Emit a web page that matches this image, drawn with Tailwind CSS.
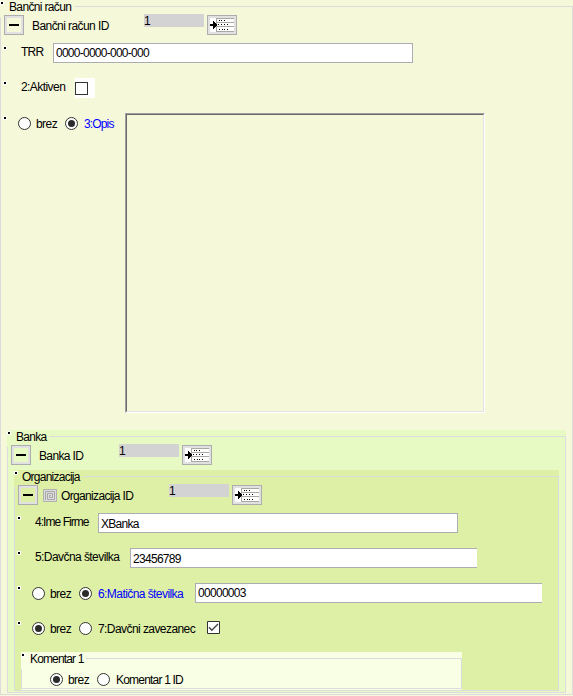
<!DOCTYPE html>
<html lang="sl">
<head>
<meta charset="utf-8">
<title>Bančni račun</title>
<script src="https://cdn.jsdelivr.net/npm/@tailwindcss/browser@4"></script>
</head>
<body class="w-[573px] h-[696px] overflow-hidden bg-[#f6f8da] font-['Liberation_Sans',Arial,sans-serif] text-[12px] leading-[14px] tracking-[-0.57px] text-black whitespace-nowrap">
<svg class="hidden">
  <symbol id="radio" viewBox="0 0 13 13"><circle cx="6.5" cy="6.5" r="6" fill="#fff" stroke="#333"/></symbol>
  <symbol id="radio-on" viewBox="0 0 13 13"><circle cx="6.5" cy="6.5" r="6" fill="#fff" stroke="#333"/><circle cx="6.5" cy="6.5" r="3.5" fill="#2b2b2b"/></symbol>
  <symbol id="pick" viewBox="0 0 24 14">
    <path fill="#fff" d="M0 0h24v14H0z"/>
    <path fill="#a8a8a0" d="M6 0h18v1H6zM6 4h18v1H6zM6 8h18v1H6zM6 13h18v1H6zM6 0h1v14H6z"/>
    <path fill="#000" d="M0 6h3V3h1v1h1v1h1v1h1v2H6v1H5v1H4v1H3V8H0z"/>
    <path fill="#000" d="M9 2h1v1H9zM11 2h1v1h-1zM14 2h1v1h-1zM8 6h1v1H8zM11 6h1v1h-1zM14 6h1v1h-1zM17 6h1v1h-1zM9 11h1v1H9zM12 11h1v1h-1zM14 11h1v1h-1zM17 11h1v1h-1z"/>
  </symbol>
  <symbol id="dot" viewBox="0 0 4 4"><path fill="#fff" d="M0 0h4v4H0z"/><path fill="#000" d="M1 1h2v2H1z"/></symbol>
</svg>

<section class="flex flex-col w-[573px] h-[695px]">
  <header class="flex h-[17px] shrink-0">
    <svg class="w-[4px] h-[4px] mt-[1px]"><use href="#dot"/></svg>
    <h1 class="ml-[5px] w-[65px] tracking-[-0.65px]">Bančni račun</h1>
    <div class="flex-1 mt-[6px] border-t border-r border-[#dcdcdc]"></div>
  </header>
  <div class="flex-1 flex flex-col border border-t-0 border-[#dcdcdc]">
    <div class="flex h-[20px] -mt-[2px] shrink-0">
      <button class="ml-[3px] w-[20px] h-[20px] border border-[#adadad] bg-[#e1e1e1] p-[2px]"><span class="flex h-full bg-[#f6f8da] items-center justify-center"><span class="w-[10px] h-[2px] bg-black"></span></span></button>
      <label class="ml-[8px] mt-[4px] w-[112px]">Bančni račun ID</label>
      <output class="-mt-[1px] w-[60px] h-[13px] bg-[#d3d3d3]">1</output>
      <button class="ml-[3px] w-[30px] h-[20px] border border-[#adadad] bg-[#e1e1e1] p-[2px]"><svg class="w-[24px] h-[14px]"><use href="#pick"/></svg></button>
    </div>
    <div class="flex h-[20px] mt-[8px] shrink-0">
      <svg class="ml-[2px] mt-[3px] w-[4px] h-[4px]"><use href="#dot"/></svg>
      <label class="ml-[14px] mt-[2px] w-[32px] tracking-[-0.8px]">TRR</label>
      <div class="w-[360px] h-[20px] border border-[#abadb3] bg-white pl-[2px] pt-[2px] tracking-[-0.74px]">0000-0000-000-000</div>
    </div>
    <div class="flex h-[20px] mt-[15px] shrink-0">
      <svg class="ml-[2px] mt-[3px] w-[4px] h-[4px]"><use href="#dot"/></svg>
      <label class="ml-[14px] mt-[2px] w-[54px]">2:Aktiven</label>
      <div class="w-[20px] h-[20px] bg-white flex items-center"><div class="w-[13px] h-[13px] border border-[#333]"></div></div>
    </div>
    <div class="flex h-[300px] mt-[15px] shrink-0">
      <svg class="ml-[2px] mt-[3px] w-[4px] h-[4px]"><use href="#dot"/></svg>
      <svg class="ml-[11px] mt-[4px] w-[13px] h-[13px]"><use href="#radio"/></svg>
      <label class="ml-[5px] mt-[4px] w-[29px]">brez</label>
      <svg class="mt-[4px] w-[13px] h-[13px]"><use href="#radio-on"/></svg>
      <label class="ml-[6px] mt-[4px] w-[41px] text-[#0000ff] tracking-[-0.85px]">3:Opis</label>
      <div class="w-[360px] h-[300px] border border-t-[#a0a0a0] border-l-[#a0a0a0] border-r-white border-b-white"><div class="h-full border border-t-[#696969] border-l-[#696969] border-r-[#e3e3e3] border-b-[#e3e3e3]"></div></div>
    </div>

    <section class="flex flex-col ml-[6px] mt-[17px] w-[559px] h-[263px] bg-[#e8fac4]">
      <header class="flex h-[17px] shrink-0">
        <svg class="w-[4px] h-[4px] mt-[1px]"><use href="#dot"/></svg>
        <h2 class="ml-[5px] w-[33px] tracking-[-0.7px]">Banka</h2>
        <div class="flex-1 mt-[6px] border-t border-r border-[#dcdcdc]"></div>
      </header>
      <div class="flex-1 flex flex-col border border-t-0 border-[#dcdcdc]">
        <div class="flex h-[20px] -mt-[2px] shrink-0">
          <button class="ml-[3px] w-[20px] h-[20px] border border-[#adadad] bg-[#e1e1e1] p-[2px]"><span class="flex h-full bg-[#e8fac4] items-center justify-center"><span class="w-[10px] h-[2px] bg-black"></span></span></button>
          <label class="ml-[8px] mt-[4px] w-[80px] tracking-[-0.65px]">Banka ID</label>
          <output class="-mt-[1px] w-[60px] h-[13px] bg-[#d3d3d3]">1</output>
          <button class="ml-[3px] w-[30px] h-[20px] border border-[#adadad] bg-[#e1e1e1] p-[2px]"><svg class="w-[24px] h-[14px]"><use href="#pick"/></svg></button>
        </div>

        <section class="flex flex-col ml-[6px] mt-[5px] w-[545px] h-[221px] bg-[#deefa6]">
          <header class="flex h-[17px] shrink-0">
            <svg class="w-[4px] h-[4px] mt-[1px]"><use href="#dot"/></svg>
            <h3 class="ml-[4px] w-[61px] tracking-[-0.75px]">Organizacija</h3>
            <div class="flex-1 mt-[6px] border-t border-r border-[#dcdcdc]"></div>
          </header>
          <div class="flex-1 flex flex-col border border-t-0 border-[#dcdcdc]">
            <div class="flex h-[20px] -mt-[2px] shrink-0">
              <button class="ml-[3px] w-[20px] h-[20px] border border-[#adadad] bg-[#e1e1e1] p-[2px]"><span class="flex h-full bg-[#deefa6] items-center justify-center"><span class="w-[10px] h-[2px] bg-black"></span></span></button>
              <svg class="ml-[5px] mt-[4px] w-[14px] h-[13px]" viewBox="0 0 14 13"><path fill="#dedede" stroke="#b0b0b0" d="M.5 .5h13v12H.5z"/><path fill="none" stroke="#a6a6a6" d="M2.5 11V2.5h9v8h-7v-6h5v4h-3v-2h1.500"/></svg>
              <label class="ml-[4px] mt-[4px] w-[108px] tracking-[-0.65px]">Organizacija ID</label>
              <output class="-mt-[1px] w-[60px] h-[13px] bg-[#d3d3d3]">1</output>
              <button class="ml-[3px] w-[30px] h-[20px] border border-[#adadad] bg-[#e1e1e1] p-[2px]"><svg class="w-[24px] h-[14px]"><use href="#pick"/></svg></button>
            </div>
            <div class="flex h-[20px] mt-[8px] shrink-0">
              <svg class="ml-[2px] mt-[3px] w-[4px] h-[4px]"><use href="#dot"/></svg>
              <label class="ml-[14px] mt-[2px] w-[63px] tracking-[-0.95px]">4:Ime Firme</label>
              <div class="w-[360px] h-[20px] border border-[#abadb3] bg-white pl-[2px] pt-[3px] tracking-[-0.7px]">XBanka</div>
            </div>
            <div class="flex h-[20px] mt-[15px] shrink-0">
              <svg class="ml-[2px] mt-[3px] w-[4px] h-[4px]"><use href="#dot"/></svg>
              <label class="ml-[14px] mt-[2px] w-[95px]">5:Davčna številka</label>
              <div class="w-[347px] h-[20px] border border-r-0 border-[#abadb3] bg-white pl-[2px] pt-[3px] tracking-[-0.7px]">23456789</div>
            </div>
            <div class="flex h-[20px] mt-[15px] shrink-0">
              <svg class="ml-[2px] mt-[3px] w-[4px] h-[4px]"><use href="#dot"/></svg>
              <svg class="ml-[11px] mt-[4px] w-[13px] h-[13px]"><use href="#radio"/></svg>
              <label class="ml-[5px] mt-[4px] w-[29px]">brez</label>
              <svg class="mt-[4px] w-[13px] h-[13px]"><use href="#radio-on"/></svg>
              <label class="ml-[6px] mt-[4px] w-[97px] text-[#0000ff]">6:Matična številka</label>
              <div class="w-[347px] h-[20px] border border-r-0 border-[#abadb3] bg-white pl-[2px] pt-[2px] tracking-[-0.7px]">00000003</div>
            </div>
            <div class="flex h-[20px] mt-[15px] shrink-0">
              <svg class="ml-[2px] mt-[3px] w-[4px] h-[4px]"><use href="#dot"/></svg>
              <svg class="ml-[11px] mt-[4px] w-[13px] h-[13px]"><use href="#radio-on"/></svg>
              <label class="ml-[5px] mt-[4px] w-[29px]">brez</label>
              <svg class="mt-[4px] w-[13px] h-[13px]"><use href="#radio"/></svg>
              <label class="ml-[6px] mt-[4px] w-[109px]">7:Davčni zavezanec</label>
              <svg class="mt-[3px] w-[13px] h-[13px]" viewBox="0 0 13 13"><path fill="#fff" stroke="#333" d="M.5 .5h12v12H.5z"/><path fill="none" stroke="#444" stroke-width="1.400" d="M2 6.300L4.800 9.200L11 3"/></svg>
            </div>

            <section class="flex flex-col ml-[6px] mt-[14px] w-[441px] h-[38px] bg-[#f9ffe4] pb-[1px]">
              <header class="flex h-[17px] shrink-0">
                <svg class="w-[4px] h-[4px] mt-[1px]"><use href="#dot"/></svg>
                <h4 class="ml-[5px] w-[56px] tracking-[-0.85px]">Komentar 1</h4>
                <div class="flex-1 mt-[6px] border-t border-r border-[#dcdcdc]"></div>
              </header>
              <div class="flex-1 flex border border-t-0 border-[#dcdcdc]">
                <svg class="ml-[28px] mt-[4px] w-[13px] h-[13px]"><use href="#radio-on"/></svg>
                <label class="ml-[5px] mt-[4px] w-[29px]">brez</label>
                <svg class="mt-[4px] w-[13px] h-[13px]"><use href="#radio"/></svg>
                <label class="ml-[6px] mt-[4px] tracking-[-0.8px]">Komentar 1 ID</label>
              </div>
            </section>
          </div>
        </section>
      </div>
    </section>
  </div>
</section>
</body>
</html>
